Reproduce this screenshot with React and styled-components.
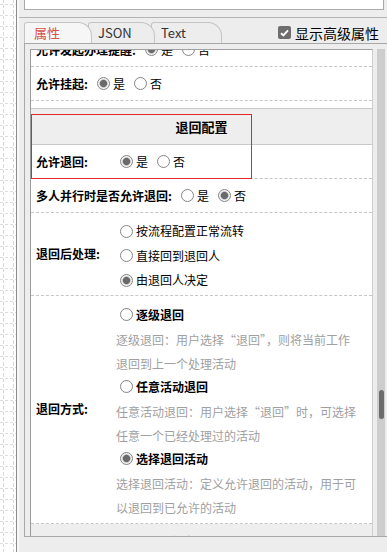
import React, { useLayoutEffect, useRef } from "react";
import styled, { createGlobalStyle } from "styled-components";

const GlobalStyle = createGlobalStyle`
  html, body {
    margin: 0;
    padding: 0;
  }
  body {
    font-family: "Noto Sans CJK SC", "Noto Sans", sans-serif;
    font-size: 12px;
    color: #000;
    background: #fff;
  }
`;

const Page = styled.div`
  display: flex;
  width: 387px;
  height: 552px;
  overflow: hidden;
`;

const Canvas = styled.div`
  flex: none;
  width: 16px;
  border-right: 1px solid #8a8a8a;
  background: #fff;

  svg {
    display: block;
  }
`;

const Side = styled.div`
  flex: 1;
  min-width: 0;
  display: flex;
  flex-direction: column;
  background: #ededed;
  border-left: 2px solid #f8f8f8;
`;

const TopBox = styled.div`
  flex: none;
  height: 9px;
  margin: 0 3px 7px 5px;
  background: #fff;
  border: 1px solid #ababab;
  border-top: none;
`;

const TabBar = styled.div`
  flex: none;
  display: flex;
  align-items: flex-end;
  height: 25px;
  padding-left: 5px;
  border-top: 1px solid #b4b4b4;
`;

const Tab = styled.div`
  position: relative;
  z-index: ${(p) => p.$z};
  box-sizing: border-box;
  width: ${(p) => p.$w}px;
  height: 21px;
  margin-left: ${(p) => (p.$first ? 0 : -4)}px;
  padding-left: 9px;
  line-height: 20px;
  font-size: 13px;
  color: ${(p) => (p.$active ? "#d4524b" : "#333")};
  background: ${(p) => (p.$active ? "#f6f6f6" : "#ededed")};
  border: 1px solid #c4c4c4;
  border-bottom: none;
  border-radius: 3px 14px 0 0;
`;

const AdvancedToggle = styled.label`
  align-self: center;
  display: flex;
  align-items: center;
  gap: 4px;
  margin: 4px 8px 0 auto;
  font-size: 14px;
  line-height: 20px;
`;

const CheckBox = styled.span`
  display: flex;
  align-items: center;
  justify-content: center;
  width: 13px;
  height: 13px;
  border-radius: 2px;
  background: #6e6e6e;
`;

const Frame = styled.div`
  flex: 1;
  min-height: 0;
  display: flex;
  margin: 0 0 15px 5px;
  padding: 5px 2px 0 5px;
  border: 1px solid #a8a8a8;
  border-right: none;
`;

const Viewport = styled.div`
  flex: 1;
  min-width: 0;
  overflow: hidden;
  background: #fff;
  border-top: 1px solid #a0a0a0;
  border-left: 1px solid #9a9a9a;
  border-right: 1px solid #cfcfcf;
`;

const Track = styled.div`
  flex: none;
  width: 8px;
  margin-left: 4px;
  background: #cdcdcd;
`;

const Thumb = styled.div`
  width: 5px;
  height: 29px;
  margin: ${(p) => p.$top}px auto 0;
  border-radius: 3px;
  background: #6b6b6b;
`;

const Section = styled.div`
  position: relative;

  & + & {
    margin-top: 7px;
  }
`;

const SectionHead = styled.div`
  height: 35px;
  line-height: 35px;
  text-align: center;
  font-size: 13px;
  font-weight: bold;
  background: #eeeeee;
  border-top: ${(p) => (p.$flush ? "none" : "1px solid #c9c9c9")};
  border-bottom: 1px solid #c9c9c9;
`;

const Row = styled.div`
  display: flex;
  align-items: center;
  min-height: 33px;
  border-bottom: 1px dashed #c6c6c6;
`;

const Label = styled.div`
  flex: none;
  box-sizing: border-box;
  min-width: ${(p) => p.$w || 0}px;
  padding: 0 5px;
  font-weight: bold;
  line-height: 20px;
`;

const Value = styled.div`
  flex: 1;
  min-width: 0;
  display: flex;
  align-items: center;
`;

const Options = styled.div`
  flex: 1;
  display: flex;
  flex-direction: column;
  padding: ${(p) => p.$pad};
`;

const RadioItem = styled.span`
  display: inline-flex;
  align-items: center;
  margin-right: 5px;
  line-height: ${(p) => p.$lh || "20px"};
  font-weight: ${(p) => (p.$bold ? "bold" : "normal")};
`;

const RadioDot = styled.span`
  flex: none;
  box-sizing: border-box;
  width: 13px;
  height: 13px;
  margin: 0 3px 0 4px;
  border-radius: 50%;
  border: 1px solid #858585;
  background: ${(p) =>
    p.$checked
      ? "radial-gradient(circle, #6a6a6a 0 3.2px, #b9b9b9 3.8px, #f4f4f4 4.6px)"
      : "#fff"};
`;

const Desc = styled.div`
  margin-top: 3px;
  color: #a0a0a0;
  line-height: 24.5px;
`;

const Highlight = styled.div`
  position: absolute;
  top: 6px;
  left: 0;
  width: 221px;
  height: 65px;
  box-sizing: border-box;
  border: 1px solid #e3262c;
  pointer-events: none;
`;

const Radio = ({ checked, children, bold, lh }) => (
  <RadioItem $bold={bold} $lh={lh}>
    <RadioDot $checked={checked} />
    {children}
  </RadioItem>
);

const YesNo = ({ yes }) => (
  <Value>
    <Radio checked={yes}>是</Radio>
    <Radio checked={!yes}>否</Radio>
  </Value>
);

const backModes = [
  {
    title: "逐级退回",
    lines: ["逐级退回：用户选择“退回”，则将当前工作", "退回到上一个处理活动"],
  },
  {
    title: "任意活动退回",
    lines: ["任意活动退回：用户选择“退回”时，可选择", "任意一个已经处理过的活动"],
  },
  {
    title: "选择退回活动",
    checked: true,
    lines: ["选择退回活动：定义允许退回的活动，用于可", "以退回到已允许的活动"],
  },
];

const afterBack = [
  { text: "按流程配置正常流转" },
  { text: "直接回到退回人" },
  { text: "由退回人决定", checked: true },
];

const GridCanvas = () => (
  <svg width="16" height="552">
    <defs>
      <pattern id="grid" width="10" height="11" patternUnits="userSpaceOnUse">
        <path d="M3.5 0V11" stroke="#d8d8d8" strokeDasharray="3 2" />
        <path d="M0 4.5H10" stroke="#dcdcdc" strokeDasharray="3 2" />
      </pattern>
    </defs>
    <rect width="16" height="552" fill="url(#grid)" />
  </svg>
);

const App = () => {
  const viewRef = useRef(null);

  useLayoutEffect(() => {
    if (viewRef.current) viewRef.current.scrollTop = 17;
  }, []);

  return (
    <Page>
      <GlobalStyle />
      <Canvas>
        <GridCanvas />
      </Canvas>
      <Side>
        <TopBox />
        <TabBar>
          <Tab $w={68} $z={3} $first $active>
            属性
          </Tab>
          <Tab $w={67} $z={2}>
            JSON
          </Tab>
          <Tab $w={71} $z={1}>
            Text
          </Tab>
          <AdvancedToggle>
            <CheckBox>
              <svg width="9" height="8" viewBox="0 0 9 8">
                <path
                  d="M1 4.2L3.4 6.5L8 1.3"
                  fill="none"
                  stroke="#fff"
                  strokeWidth="1.9"
                />
              </svg>
            </CheckBox>
            显示高级属性
          </AdvancedToggle>
        </TabBar>
        <Frame>
          <Viewport ref={viewRef}>
            <Section>
              <Row>
                <Label>允许发起办理提醒:</Label>
                <YesNo yes />
              </Row>
              <Row>
                <Label>允许挂起:</Label>
                <YesNo yes />
              </Row>
            </Section>
            <Section>
              <SectionHead>退回配置</SectionHead>
              <Row>
                <Label $w={85}>允许退回:</Label>
                <YesNo yes />
              </Row>
              <Row>
                <Label $w={85}>多人并行时是否允许退回:</Label>
                <YesNo yes={false} />
              </Row>
              <Row>
                <Label $w={85}>退回后处理:</Label>
                <Options $pad="6px 0 2px">
                  {afterBack.map((o) => (
                    <Radio key={o.text} checked={o.checked} lh="24.5px">
                      {o.text}
                    </Radio>
                  ))}
                </Options>
              </Row>
              <Row>
                <Label $w={85}>退回方式:</Label>
                <Options $pad="9px 0 2px">
                  {backModes.map((m) => (
                    <div key={m.title}>
                      <Radio checked={m.checked} bold>
                        {m.title}
                      </Radio>
                      <Desc>
                        {m.lines.map((l) => (
                          <div key={l}>{l}</div>
                        ))}
                      </Desc>
                    </div>
                  ))}
                </Options>
              </Row>
              <SectionHead $flush>选择允许退回的活动</SectionHead>
              <Row>
                <Label $w={85}>退回活动:</Label>
                <Value />
              </Row>
              <Highlight />
            </Section>
          </Viewport>
          <Track>
            <Thumb $top={341} />
          </Track>
        </Frame>
      </Side>
    </Page>
  );
};

export default App;
